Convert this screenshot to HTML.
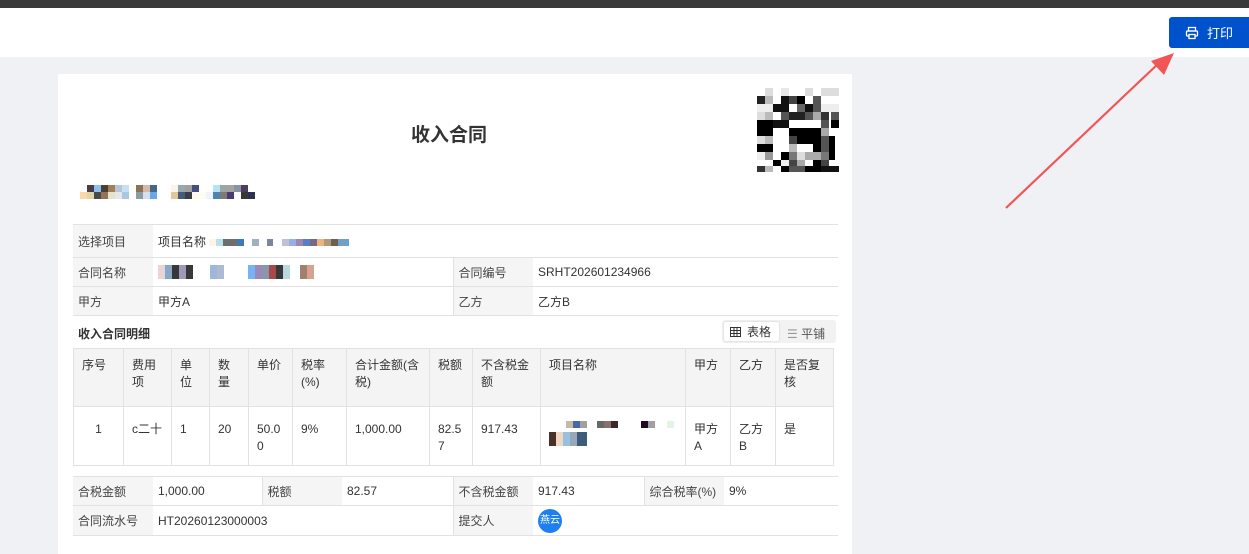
<!DOCTYPE html>
<html><head><meta charset="utf-8"><style>
*{margin:0;padding:0;box-sizing:border-box}
body{width:1249px;height:541px;overflow:hidden;background:#f0f1f5;font-family:"Liberation Sans","Noto Sans CJK SC",sans-serif;font-size:12px;color:#333;position:relative}
.abs{position:absolute}
.top{left:0;top:0;width:1249px;height:8px;background:#3a3a3a}
.hdr{left:0;top:8px;width:1249px;height:49px;background:#fff}
.btn{left:1169px;top:17px;width:80px;height:31px;background:#0052cc;border-radius:3px 0 0 3px;color:#fff;font-size:13px;display:flex;align-items:center;padding-left:16px}
.paper{left:58px;top:74px;width:794px;height:480px;background:#fff}
table{border-collapse:collapse;position:absolute;table-layout:fixed}
td{border:1px solid #e2e2e2;padding:0 5px;vertical-align:middle}
.it td{border-left:none;border-right:none}
.it td.lb.s{border-left:1px solid #e2e2e2}
.lb{background:#f5f5f5;color:#444}
.dt td{vertical-align:top;padding:8px 8px;line-height:17px}
.dt tr.h td{background:#f4f4f4}
.m{display:inline-block;width:7px;height:7px}
</style></head><body>
<div class="abs top"></div>
<div class="abs hdr"></div>
<div class="abs btn"><svg width="14" height="14" viewBox="0 0 14 14" fill="none" stroke="#fff" stroke-width="1.3"><rect x="3.5" y="1.5" width="7" height="3.5"/><rect x="1.5" y="5" width="11" height="5" rx="1"/><rect x="4" y="8.5" width="6" height="4" fill="#0052cc"/></svg><span style="margin-left:8px">打印</span></div>
<svg class="abs" style="left:0;top:0" width="1249" height="541"><line x1="1006" y1="208" x2="1160" y2="62" stroke="#f25555" stroke-width="2.2"/><polygon points="1174,53 1151,61 1164,75" fill="#f25555"/></svg>
<div class="abs paper"></div>
<div class="abs" style="left:52px;top:120px;width:794px;text-align:center;font-size:19px;font-weight:bold;color:#333">收入合同</div>
<svg class="abs" style="left:757px;top:88px" width="82" height="84" shape-rendering="crispEdges">
<g>
<rect width="82" height="84" fill="#fff"/>
<rect x="8" y="0" width="8" height="8" fill="#ddd"/><rect x="24" y="0" width="8" height="8" fill="#e8e8e8"/><rect x="48" y="0" width="8" height="8" fill="#ddd"/><rect x="64" y="0" width="18" height="8" fill="#ddd"/>
<rect x="0" y="8" width="8" height="8" fill="#222"/><rect x="8" y="8" width="8" height="8" fill="#bbb"/><rect x="24" y="8" width="8" height="8" fill="#111"/><rect x="32" y="8" width="8" height="8" fill="#444"/><rect x="40" y="8" width="8" height="8" fill="#000"/><rect x="56" y="8" width="8" height="8" fill="#555"/>
<rect x="16" y="16" width="16" height="8" fill="#111"/><rect x="40" y="16" width="8" height="8" fill="#666"/><rect x="48" y="16" width="8" height="8" fill="#111"/><rect x="56" y="16" width="8" height="8" fill="#555"/><rect x="0" y="16" width="16" height="8" fill="#eee"/><rect x="64" y="16" width="18" height="8" fill="#eee"/>
<rect x="0" y="24" width="8" height="8" fill="#ddd"/><rect x="8" y="24" width="8" height="8" fill="#bbb"/><rect x="24" y="24" width="8" height="8" fill="#555"/><rect x="32" y="24" width="16" height="8" fill="#222"/><rect x="48" y="24" width="8" height="8" fill="#555"/><rect x="56" y="24" width="8" height="8" fill="#aaa"/><rect x="64" y="24" width="8" height="8" fill="#333"/><rect x="74" y="24" width="8" height="8" fill="#555"/>
<rect x="0" y="32" width="16" height="8" fill="#000"/><rect x="16" y="32" width="16" height="8" fill="#111"/><rect x="64" y="32" width="8" height="8" fill="#555"/><rect x="74" y="32" width="8" height="8" fill="#000"/>
<rect x="0" y="40" width="16" height="8" fill="#000"/><rect x="32" y="40" width="32" height="8" fill="#000"/><rect x="64" y="40" width="8" height="8" fill="#aaa"/>
<rect x="0" y="48" width="8" height="8" fill="#ddd"/><rect x="8" y="48" width="8" height="8" fill="#bbb"/><rect x="32" y="48" width="8" height="8" fill="#444"/><rect x="40" y="48" width="24" height="8" fill="#000"/><rect x="64" y="48" width="8" height="8" fill="#555"/><rect x="72" y="48" width="6" height="8" fill="#000"/>
<rect x="0" y="56" width="16" height="8" fill="#000"/><rect x="32" y="56" width="8" height="8" fill="#bbb"/><rect x="56" y="56" width="8" height="8" fill="#000"/><rect x="64" y="56" width="8" height="8" fill="#555"/><rect x="72" y="56" width="6" height="8" fill="#000"/>
<rect x="0" y="64" width="8" height="8" fill="#eee"/><rect x="8" y="64" width="8" height="8" fill="#999"/><rect x="24" y="64" width="8" height="8" fill="#000"/><rect x="32" y="64" width="8" height="8" fill="#777"/><rect x="40" y="64" width="8" height="8" fill="#ddd"/><rect x="48" y="64" width="16" height="8" fill="#aaa"/><rect x="64" y="64" width="8" height="8" fill="#777"/><rect x="72" y="64" width="6" height="8" fill="#000"/>
<rect x="16" y="72" width="8" height="6" fill="#000"/><rect x="24" y="72" width="8" height="6" fill="#eee"/><rect x="32" y="72" width="8" height="6" fill="#444"/><rect x="40" y="72" width="8" height="6" fill="#aaa"/><rect x="56" y="72" width="8" height="6" fill="#000"/><rect x="64" y="72" width="8" height="6" fill="#444"/>
<rect x="0" y="78" width="8" height="6" fill="#333"/><rect x="8" y="78" width="8" height="6" fill="#bbb"/><rect x="24" y="78" width="8" height="6" fill="#000"/><rect x="32" y="78" width="16" height="6" fill="#555"/><rect x="48" y="78" width="16" height="6" fill="#000"/><rect x="64" y="78" width="18" height="6" fill="#111"/>
</g></svg>
<div class="abs" style="left:80px;top:185px;line-height:0;white-space:nowrap">
<div><span class="m"></span><span class="m" style="background:#4a3b4a"></span><span class="m" style="background:#8fbfee"></span><span class="m" style="background:#4a3f33"></span><span class="m" style="background:#a0805a"></span><span class="m" style="background:#b8c4d8"></span><span class="m" style="background:#c8e0f4"></span><span class="m" style="background:#fdfcf6"></span><span class="m" style="background:#8a7258"></span><span class="m" style="background:#d6b8a8"></span><span class="m" style="background:#466888"></span><span class="m"></span><span class="m"></span><span class="m" style="background:#fbf4ea"></span><span class="m" style="background:#98a8b0"></span><span class="m" style="background:#a0a0a0"></span><span class="m" style="background:#464e80"></span><span class="m"></span><span class="m"></span><span class="m" style="background:#b4e4f4"></span><span class="m" style="background:#a0a4a4"></span><span class="m" style="background:#a4a4a4"></span><span class="m" style="background:#8a94a0"></span><span class="m" style="background:#4e3e5e"></span></div>
<div><span class="m" style="background:#fcd8a8"></span><span class="m" style="background:#e0d4a8"></span><span class="m" style="background:#4a4a4a"></span><span class="m" style="background:#957456"></span><span class="m" style="background:#e4e4cc"></span><span class="m" style="background:#e4e8ee"></span><span class="m" style="background:#a8c8e0"></span><span class="m"></span><span class="m" style="background:#8a9ca4"></span><span class="m" style="background:#d4e0f0"></span><span class="m" style="background:#68a8e8"></span><span class="m"></span><span class="m"></span><span class="m" style="background:#e2c898"></span><span class="m" style="background:#445c7c"></span><span class="m" style="background:#3a3e44"></span><span class="m" style="background:#fdfaec"></span><span class="m" style="background:#fdfcf0"></span><span class="m" style="background:#eef4fb"></span><span class="m" style="background:#5084b0"></span><span class="m" style="background:#7e7a74"></span><span class="m" style="background:#4c3a74"></span><span class="m"></span><span class="m" style="background:#383838"></span><span class="m" style="background:#303050"></span></div>
</div>
<table class="it" style="left:73px;top:224px;width:765px">
<colgroup><col style="width:80px"><col style="width:300px"><col style="width:80px"><col></colgroup>
<tr style="height:33px"><td class="lb">选择项目</td><td colspan="3">项目名称 <span style="display:inline-block;width:140px;height:7px;vertical-align:middle;background:linear-gradient(90deg,#fff3ea 0 7px,#b6e2e8 7px 14px,#6e6e6e 14px 28px,#3c7ab8 28px 35px,#fff 35px 43px,#a0b0c0 43px 50px,#fff 50px 58px,#7c84a0 58px 64px,#fff 64px 73px,#c0c0d8 73px 80px,#98b0e0 80px 87px,#9c88b0 87px 94px,#5880c8 94px 101px,#786888 101px 108px,#e8b480 108px 115px,#b09878 115px 122px,#6e6050 122px 129px,#70a0c8 129px 140px)"></span></td></tr>
<tr style="height:29px"><td class="lb">合同名称</td><td><span style="display:inline-block;width:160px;height:14px;vertical-align:middle;background:linear-gradient(90deg,#e8d4d8 0 7px,#88a8c8 7px 14px,#383838 14px 21px,#a098b8 21px 28px,#383838 28px 35px,#fff 35px 52px,#a0b8d8 52px 59px,#b0b8d8 59px 66px,#fff 66px 90px,#74b4f4 90px 97px,#9c88b8 97px 104px,#8898a8 104px 111px,#a84848 111px 118px,#383838 118px 125px,#bcd8e0 125px 132px,#fff 132px 142px,#a08070 142px 149px,#d8a090 149px 156px,#fff 156px)"></span></td><td class="lb s">合同编号</td><td>SRHT202601234966</td></tr>
<tr style="height:29px"><td class="lb">甲方</td><td>甲方A</td><td class="lb s">乙方</td><td>乙方B</td></tr>
</table>
<div class="abs" style="left:78px;top:325px;font-weight:bold;font-size:12px">收入合同明细</div>
<div class="abs" style="left:722px;top:320px;width:114px;height:23px;background:#f2f2f2;border-radius:3px"></div>
<div class="abs" style="left:724px;top:322px;width:55px;height:19px;background:#fff;border-radius:2px;box-shadow:0 0 2px rgba(0,0,0,.15);font-size:12px;display:flex;align-items:center;padding-left:6px">
<svg width="11" height="10" viewBox="0 0 11 10" fill="none" stroke="#333"><rect x=".5" y=".5" width="10" height="9"/><line x1=".5" y1="3.5" x2="10.5" y2="3.5"/><line x1=".5" y1="6.5" x2="10.5" y2="6.5"/><line x1="4" y1=".5" x2="4" y2="9.5"/><line x1="7" y1=".5" x2="7" y2="9.5"/></svg><span style="margin-left:6px">表格</span></div>
<div class="abs" style="left:787px;top:325px;font-size:12px;color:#555"><span style="color:#999">☰</span> 平铺</div>
<table class="dt" style="left:73px;top:348px;width:761px">
<colgroup><col style="width:50px"><col style="width:48px"><col style="width:38px"><col style="width:39px"><col style="width:44px"><col style="width:54px"><col style="width:83px"><col style="width:43px"><col style="width:68px"><col style="width:145px"><col style="width:45px"><col style="width:45px"><col></colgroup>
<tr class="h" style="height:58px"><td>序号</td><td>费用项</td><td>单位</td><td>数量</td><td>单价</td><td>税率(%)</td><td>合计金额(含税)</td><td>税额</td><td>不含税金额</td><td>项目名称</td><td>甲方</td><td>乙方</td><td>是否复核</td></tr>
<tr style="height:59px"><td style="text-align:center;padding-top:14px">1</td><td style="padding-top:14px">c二十</td><td style="padding-top:14px">1</td><td style="padding-top:14px">20</td><td style="padding-top:14px;word-break:break-all">50.00</td><td style="padding-top:14px">9%</td><td style="padding-top:14px">1,000.00</td><td style="padding-top:14px;word-break:break-all">82.57</td><td style="padding-top:14px">917.43</td><td style="padding-top:14px"><span style="display:block;width:115px;height:7px;margin-left:10px;background:linear-gradient(90deg,#fff 0 7px,#c8b8a8 7px 14px,#4468a8 14px 21px,#a0a0a0 21px 28px,#fff 28px 38px,#686868 38px 45px,#887070 45px 52px,#3c2828 52px 59px,#fff 59px 82px,#200820 82px 89px,#a0a0a0 89px 96px,#fff 96px 108px,#e4f4e4 108px 115px)"></span><span style="display:block;width:38px;height:14px;margin-top:4px;background:linear-gradient(90deg,#4a3028 0 7px,#f0d8c0 7px 14px,#98c0e0 14px 21px,#98a8b8 21px 28px,#3c5c7c 28px 38px)"></span></td><td style="padding-top:14px">甲方A</td><td style="padding-top:14px">乙方B</td><td style="padding-top:14px">是</td></tr>
</table>
<table class="it" style="left:73px;top:476px;width:765px">
<colgroup><col style="width:80px"><col style="width:109px"><col style="width:80px"><col style="width:111px"><col style="width:80px"><col style="width:111px"><col style="width:80px"><col></colgroup>
<tr style="height:29px"><td class="lb">合税金额</td><td>1,000.00</td><td class="lb s">税额</td><td>82.57</td><td class="lb s">不含税金额</td><td>917.43</td><td class="lb s">综合税率(%)</td><td>9%</td></tr>
<tr style="height:30px"><td class="lb">合同流水号</td><td colspan="3">HT20260123000003</td><td class="lb s">提交人</td><td colspan="3"><span style="display:inline-block;width:24px;height:24px;border-radius:50%;background:#1e7ff0;color:#fff;font-size:10px;line-height:24px;text-align:center">燕云</span></td></tr>
</table>
</body></html>
